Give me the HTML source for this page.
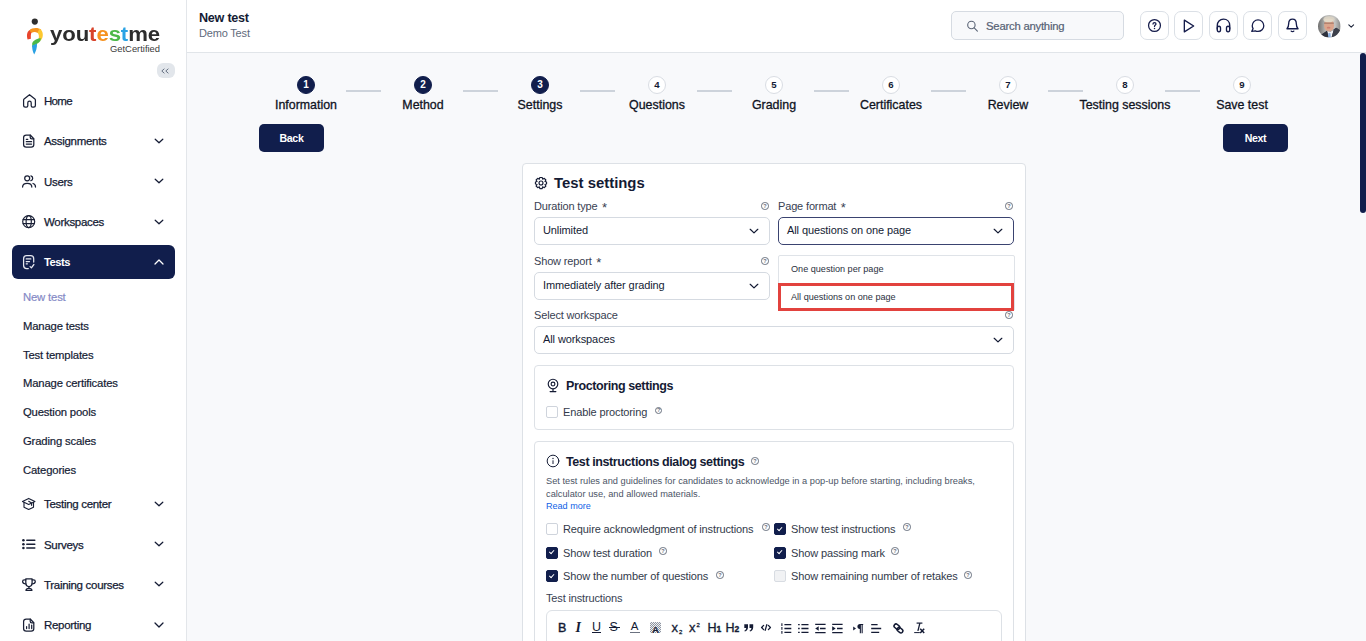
<!DOCTYPE html>
<html><head><meta charset="utf-8">
<style>
*{box-sizing:border-box;margin:0;padding:0}
html,body{width:1366px;height:641px;overflow:hidden;background:#f8f9fb;font-family:"Liberation Sans",sans-serif;color:#141b34}
.abs{position:absolute}
#side{position:absolute;left:0;top:0;width:187px;height:641px;background:#fff;border-right:1px solid #e3e6ea}
#head{position:absolute;left:187px;top:0;width:1179px;height:53px;background:#fff;border-bottom:1px solid #e1e5e9}
.mi{position:absolute;left:44px;font-size:11.5px;color:#141b34;white-space:nowrap;line-height:14px;letter-spacing:-0.3px;-webkit-text-stroke:0.25px currentColor}
.sm{position:absolute;left:23px;font-size:11.3px;color:#141b34;white-space:nowrap;line-height:14px;letter-spacing:-0.17px;-webkit-text-stroke:0.2px currentColor}
.ico{position:absolute;left:21px;width:16px;height:16px}
.chev{position:absolute;left:153px;width:12px;height:12px}
.chev path{stroke-width:1.25}
svg{display:block;overflow:visible}
.ib{position:absolute;top:11px;width:28.9px;height:29.4px;border:1px solid #dbe0e6;border-radius:7px;background:#fff}

.sc{position:absolute;top:76px;width:18px;height:18px;border-radius:50%;border:1px solid #d9dde3;background:#fff;font-size:9.6px;font-weight:bold;line-height:16px;text-align:center;color:#141b34}
.sc.on{background:#111e4c;border-color:#111e4c;color:#fff;font-size:10px}
.sl{position:absolute;top:97px;-webkit-text-stroke:0.3px #10141f;width:140px;text-align:center;font-size:12.4px;line-height:16px;color:#10141f;white-space:nowrap}
.sline{position:absolute;top:90px;margin-left:-0.8px;width:35px;height:2px;background:#cdd3db}
.btn{position:absolute;width:65px;height:28px;border-radius:5px;background:#111e4c;color:#fff;font-size:10.6px;font-weight:bold;line-height:28px;text-align:center;letter-spacing:-0.35px}
.lab{position:absolute;font-size:11px;line-height:13px;color:#384152;white-space:nowrap;letter-spacing:-0.15px}
.sel{position:absolute;height:28px;border:1px solid #d5dae1;border-radius:5px;background:#fff;font-size:11px;line-height:25px;padding-left:8px;letter-spacing:-0.1px;color:#141b34;white-space:nowrap}
.sch{position:absolute;width:12px;height:12px;fill:none;stroke:#141b34;stroke-width:1.25;stroke-linecap:round;stroke-linejoin:round}
.qi{position:absolute;width:7.5px;height:7.5px;border-radius:50%;border:0.9px solid #6a7280}
.qi:after{content:"?";position:absolute;left:1.3px;top:-0.4px;font-size:5.5px;line-height:7px;font-weight:bold;color:#6a7280}
.panel{position:absolute;border:1px solid #dde1e6;border-radius:4px;background:#fff}
.ptitle{position:absolute;font-size:12.5px;font-weight:bold;line-height:16px;color:#141b34;white-space:nowrap;letter-spacing:-0.4px}
.cb{position:absolute;width:12px;height:12px;border:1px solid #cfd4dc;border-radius:2px;background:#fff}
.cb.on{background:#111e4c;border-color:#111e4c}
.cb.on:after{content:"";position:absolute;left:3.4px;top:1.8px;width:2.4px;height:4.4px;border:solid #fff;border-width:0 1.1px 1.1px 0;transform:rotate(42deg)}
.cb.dis{background:#f1f2f4;border-color:#d8dce2}
.cbl{position:absolute;font-size:11px;line-height:14px;color:#323a4a;white-space:nowrap;letter-spacing:-0.12px}
.tbt{position:absolute;line-height:15px;color:#141b34;white-space:nowrap}
</style></head><body>
<div id="side">
<!-- logo -->
<svg class="abs" style="left:25px;top:17px" width="20" height="38" viewBox="0 0 20 38">
 <circle cx="9.8" cy="4.6" r="3.1" fill="#2e2e2e"/>
 <path d="M2.6 22.5 C1.2 17.5 2.2 13.5 6.2 12.4 L6.6 15.4 C5.6 16.8 5.8 19.8 5.9 21.8 Z" fill="#e8452c"/>
 <path d="M4.4 13.4 C6.8 10.6 13.4 10.2 16.4 13 L12.6 16 C10.6 14.6 8.2 14.8 6.4 16 Z" fill="#f7941e"/>
 <path d="M14.6 11.8 C18.6 14 18.9 20.4 15.6 23.6 L13.4 23 C14.2 20 14.2 17.4 12.4 15.6 Z" fill="#fdc82f"/>
 <path d="M15.8 21.2 C13 21.2 8.6 23 7.2 26.2 L7.2 30.4 C9.4 27.6 13.4 27 15.4 24 Z" fill="#4cb848"/>
 <path d="M7.2 28.6 C8.6 27.8 11 27.2 12 26.6 C12.2 30.6 11 34.6 9.2 37.6 C7.6 34.8 7 31.6 7.2 28.6 Z" fill="#2aa1e3"/>
</svg>
<div class="abs" id="logot" style="left:50px;top:21.5px;font-size:19.6px;font-weight:bold;letter-spacing:-0.1px;line-height:24px;transform:scaleX(1.132);transform-origin:0 0;color:#2d2d2d;white-space:nowrap">you<span style="color:#d8432a">t</span><span style="color:#f6921e">e</span><span style="color:#4db848">s</span><span style="color:#2ba3e4">t</span>me</div>
<div class="abs" id="logog" style="left:110px;top:43px;font-size:9.4px;line-height:11px;color:#3a3a3a;white-space:nowrap">GetCertified</div>
<!-- collapse -->
<div class="abs" style="left:157px;top:63px;width:18px;height:15px;border-radius:6px;background:#e2e6eb"></div>
<svg class="abs" style="left:161.2px;top:67.6px" width="9" height="6" viewBox="0 0 9 6" fill="none" stroke="#5a6578" stroke-width="0.9"><path d="M3.4 0.7 L0.8 3 L3.4 5.3 M7.4 0.7 L4.8 3 L7.4 5.3"/></svg>

<!-- Home -->
<svg class="abs" style="left:22px;top:93px" width="16" height="16" viewBox="0 0 16 16" fill="none" stroke="#1a2036" stroke-width="1.25" stroke-linecap="round" stroke-linejoin="round"><path d="M7.5 1.7 L2.1 6 Q1.6 6.4 1.6 7.1 V12.3 Q1.6 14.2 3.5 14.2 H4.4 Q5.8 14.2 5.8 12.8 V9.7 Q5.8 8.1 7.5 8.1 Q9.2 8.1 9.2 9.7 V12.8 Q9.2 14.2 10.6 14.2 H11.5 Q13.4 14.2 13.4 12.3 V7.1 Q13.4 6.4 12.9 6 Z"/></svg>
<div class="mi" style="top:94px;letter-spacing:-0.7px">Home</div>
<!-- Assignments -->
<svg class="abs" style="left:22px;top:133px" width="16" height="16" viewBox="0 0 16 16" fill="none" stroke="#1a2036" stroke-width="1.25" stroke-linecap="round" stroke-linejoin="round"><path d="M1.6 4.6 Q1.6 2 4.2 2 H8.2 L11.8 5.8 V11.6 Q11.8 14.2 9.2 14.2 H4.2 Q1.6 14.2 1.6 11.6 Z"/><path d="M8.2 2.2 V4.2 Q8.2 5.8 9.8 5.8 H11.6" /><path d="M4.3 6.3 H5.8 M4.3 8.7 H9.6 M4.3 11.1 H9.6"/></svg>
<div class="mi" style="top:134px">Assignments</div>
<svg class="chev" style="top:135px" viewBox="0 0 12 12" fill="none" stroke="#141b34" stroke-width="1.5" stroke-linecap="round" stroke-linejoin="round"><path d="M2.2 4.2 L6 7.8 L9.8 4.2"/></svg>
<!-- Users -->
<svg class="abs" style="left:21px;top:174px" width="16" height="16" viewBox="0 0 16 16" fill="none" stroke="#1a2036" stroke-width="1.25" stroke-linecap="round" stroke-linejoin="round"><circle cx="6.2" cy="4.3" r="2.5"/><path d="M9.9 1.9 A2.5 2.5 0 0 1 9.9 6.7"/><path d="M1.6 13 C1.6 10.4 3.2 9.4 6.2 9.4 C9.2 9.4 10.8 10.4 10.8 13"/><path d="M12 9.5 C13.7 9.9 14.5 11 14.5 13"/></svg>
<div class="mi" style="top:175px">Users</div>
<svg class="chev" style="top:175px" viewBox="0 0 12 12" fill="none" stroke="#141b34" stroke-width="1.5" stroke-linecap="round" stroke-linejoin="round"><path d="M2.2 4.2 L6 7.8 L9.8 4.2"/></svg>
<!-- Workspaces -->
<svg class="abs" style="left:21px;top:214px" width="16" height="16" viewBox="0 0 16 16" fill="none" stroke="#1a2036" stroke-width="1.2" stroke-linecap="round" stroke-linejoin="round"><circle cx="7.7" cy="7.6" r="6"/><ellipse cx="7.7" cy="7.6" rx="2.6" ry="6"/><path d="M2.1 5.6 H13.3 M2.1 9.6 H13.3"/></svg>
<div class="mi" style="top:215px">Workspaces</div>
<svg class="chev" style="top:216px" viewBox="0 0 12 12" fill="none" stroke="#141b34" stroke-width="1.5" stroke-linecap="round" stroke-linejoin="round"><path d="M2.2 4.2 L6 7.8 L9.8 4.2"/></svg>
<!-- Tests active -->
<div class="abs" style="left:11.7px;top:244.7px;width:163.4px;height:34.5px;border-radius:6px;background:#111e4c"></div>
<svg class="abs" style="left:21px;top:254px" width="16" height="16" viewBox="0 0 16 16" fill="none" stroke="#e6e8f0" stroke-width="1.25" stroke-linecap="round" stroke-linejoin="round"><path d="M12.7 8 V4.7 Q12.7 1.7 9.7 1.7 H5.6 Q2.6 1.7 2.6 4.7 V11.5 Q2.6 14.5 5.6 14.5 H7.3"/><path d="M5.2 4.9 H9.8 M5.2 7.5 H8.5 M5.2 9.8 H6.4"/><path d="M9.1 12.6 L10.4 13.8 L12.9 10.5"/></svg>
<div class="mi" style="top:255px;color:#fff;font-weight:bold;-webkit-text-stroke:0;letter-spacing:-0.45px;font-size:11.2px">Tests</div>
<svg class="chev" style="top:256px" viewBox="0 0 12 12" fill="none" stroke="#fff" stroke-width="1.5" stroke-linecap="round" stroke-linejoin="round"><path d="M2 8 L6 4 L10 8"/></svg>
<!-- submenu -->
<div class="sm" style="top:290px;color:#858ac6">New test</div>
<div class="sm" style="top:319px">Manage tests</div>
<div class="sm" style="top:348px">Test templates</div>
<div class="sm" style="top:376px">Manage certificates</div>
<div class="sm" style="top:405px">Question pools</div>
<div class="sm" style="top:434px">Grading scales</div>
<div class="sm" style="top:463px">Categories</div>
<!-- Testing center -->
<svg class="abs" style="left:21px;top:496px" width="16" height="16" viewBox="0 0 16 16" fill="none" stroke="#1a2036" stroke-width="1.15" stroke-linecap="round" stroke-linejoin="round"><path d="M7.7 2.4 L1.5 5.5 L7.7 8.4 L13.9 5.5 Z"/><path d="M3 6.3 V11.2 L7.7 13.5 L12.5 11.2 V6.3"/><path d="M7.7 5.3 L10.6 6.9 V9.3"/></svg>
<div class="mi" style="top:497px">Testing center</div>
<svg class="chev" style="top:498px" viewBox="0 0 12 12" fill="none" stroke="#141b34" stroke-width="1.5" stroke-linecap="round" stroke-linejoin="round"><path d="M2.2 4.2 L6 7.8 L9.8 4.2"/></svg>
<!-- Surveys -->
<svg class="abs" style="left:21px;top:537px" width="16" height="16" viewBox="0 0 16 16" fill="none" stroke="#1a2036" stroke-width="1.25" stroke-linecap="round" stroke-linejoin="round"><path d="M5.8 3.3 H13.8 M5.8 7.2 H13.8 M5.8 11 H13.8" stroke-width="1.5"/><circle cx="2.4" cy="3.3" r="1.3" fill="#1a2036" stroke="none"/><circle cx="2.4" cy="7.2" r="1.3" fill="#1a2036" stroke="none"/><circle cx="2.4" cy="11" r="1.3" fill="#1a2036" stroke="none"/></svg>
<div class="mi" style="top:538px">Surveys</div>
<svg class="chev" style="top:538px" viewBox="0 0 12 12" fill="none" stroke="#141b34" stroke-width="1.5" stroke-linecap="round" stroke-linejoin="round"><path d="M2.2 4.2 L6 7.8 L9.8 4.2"/></svg>
<!-- Training courses -->
<svg class="abs" style="left:21px;top:577px" width="16" height="16" viewBox="0 0 16 16" fill="none" stroke="#1a2036" stroke-width="1.25" stroke-linecap="round" stroke-linejoin="round"><path d="M4.8 1.8 H11.1 V5.5 C11.1 8 9.8 9.5 7.95 9.5 C6.1 9.5 4.8 8 4.8 5.5 Z"/><path d="M4.8 2.8 H3.3 Q1.6 2.8 1.6 4.4 Q1.6 6.6 5 7"/><path d="M11.1 2.8 H12.6 Q14.3 2.8 14.3 4.4 Q14.3 6.6 10.9 7"/><path d="M7.95 9.5 V11.2"/><path d="M5 13.4 Q5 11.3 7.95 11.3 Q10.9 11.3 10.9 13.4 Z"/></svg>
<div class="mi" style="top:578px">Training courses</div>
<svg class="chev" style="top:578px" viewBox="0 0 12 12" fill="none" stroke="#141b34" stroke-width="1.5" stroke-linecap="round" stroke-linejoin="round"><path d="M2.2 4.2 L6 7.8 L9.8 4.2"/></svg>
<!-- Reporting -->
<svg class="abs" style="left:22px;top:617px" width="16" height="16" viewBox="0 0 16 16" fill="none" stroke="#1a2036" stroke-width="1.25" stroke-linecap="round" stroke-linejoin="round"><path d="M1.6 4.6 Q1.6 2 4.2 2 H8.2 L11.8 5.8 V11.6 Q11.8 14.2 9.2 14.2 H4.2 Q1.6 14.2 1.6 11.6 Z"/><path d="M8.2 2.2 V4.2 Q8.2 5.8 9.8 5.8 H11.6" /><path d="M4.6 11.6 V9.7 M7.1 11.6 V7 M9.7 11.6 V8.1"/></svg>
<div class="mi" style="top:618px">Reporting</div>
<svg class="chev" style="top:619px" viewBox="0 0 12 12" fill="none" stroke="#141b34" stroke-width="1.5" stroke-linecap="round" stroke-linejoin="round"><path d="M2 4 L6 8 L10 4"/></svg>
</div>
<div id="head">
<div class="abs" style="left:12px;top:11px;font-size:12.6px;font-weight:bold;line-height:15px;color:#141b34;letter-spacing:-0.25px;white-space:nowrap">New test</div>
<div class="abs" style="left:12px;top:27px;font-size:11px;line-height:13px;color:#5f6b7c;white-space:nowrap;letter-spacing:-0.18px">Demo Test</div>
<!-- search -->
<div class="abs" style="left:764px;top:11px;width:173px;height:29.4px;border:1px solid #d6dbe2;border-radius:5px;background:#f8f9fb"></div>
<svg class="abs" style="left:779px;top:20px" width="12" height="12" viewBox="0 0 12 12" fill="none" stroke="#5a6476" stroke-width="1.1" stroke-linecap="round"><circle cx="5.4" cy="5" r="3.7"/><path d="M8.2 7.9 L11.4 11.1"/></svg>
<div class="abs" style="left:799px;top:19px;font-size:11.3px;line-height:14px;color:#566174;white-space:nowrap;letter-spacing:-0.22px;-webkit-text-stroke:0.2px #566174">Search anything</div>
<!-- icon buttons -->
<div class="ib" style="left:953px"></div>
<div class="ib" style="left:987.3px"></div>
<div class="ib" style="left:1021.8px"></div>
<div class="ib" style="left:1056px"></div>
<div class="ib" style="left:1091px"></div>
<svg class="abs" style="left:959.7px;top:18.4px" width="15" height="15" viewBox="0 0 24 24" fill="none" stroke="#141b4a" stroke-width="2" stroke-linecap="round" stroke-linejoin="round"><circle cx="12" cy="12" r="9.5"/><path d="M9.6 9.6 C9.6 8 10.6 7.2 12 7.2 C13.4 7.2 14.4 8 14.4 9.4 C14.4 11.2 12 11.4 12 13.4"/><path d="M12 16.6 V16.7" stroke-width="2.4"/></svg>
<svg class="abs" style="left:993px;top:18px" width="16" height="16" viewBox="0 0 24 24" fill="none" stroke="#141b4a" stroke-width="2" stroke-linecap="round" stroke-linejoin="round"><path d="M6.5 3.2 L20.5 12 L6.5 20.8 Z"/></svg>
<svg class="abs" style="left:1027.5px;top:17.2px" width="17" height="17" viewBox="0 0 24 24" fill="none" stroke="#141b4a" stroke-width="1.9" stroke-linecap="round" stroke-linejoin="round"><path d="M3.2 17 V12 C3.2 6.8 6.8 3 12 3 C17.2 3 20.8 6.8 20.8 12 V17"/><path d="M3.2 16 C3.2 14 4.2 13 5.6 13 C7 13 7.8 14 7.8 16 V18 C7.8 20 7 21 5.6 21 C4.2 21 3.2 20 3.2 18 Z"/><path d="M16.2 16 C16.2 14 17 13 18.4 13 C19.8 13 20.8 14 20.8 16 V18 C20.8 20 19.8 21 18.4 21 C17 21 16.2 20 16.2 18 Z"/></svg>
<svg class="abs" style="left:1062.5px;top:18.4px" width="15.4" height="15.4" viewBox="0 0 24 24" fill="none" stroke="#141b4a" stroke-width="2" stroke-linecap="round" stroke-linejoin="round"><path d="M12.5 3 C17.5 3 21.5 7 21.5 12 C21.5 17 17.5 21 12.5 21 C11 21 9.6 20.7 8.4 20 L2.8 20.8 L4.8 16.6 C4 15.2 3.5 13.7 3.5 12 C3.5 7 7.5 3 12.5 3 Z"/></svg>
<svg class="abs" style="left:1097.1px;top:17.2px" width="17" height="17" viewBox="0 0 24 24" fill="none" stroke="#141b4a" stroke-width="1.9" stroke-linecap="round" stroke-linejoin="round"><path d="M4.2 16.6 C5.8 15 6.6 13.2 6.6 9.6 C6.6 5.6 8.8 3 12 3 C15.2 3 17.4 5.6 17.4 9.6 C17.4 13.2 18.2 15 19.8 16.6 Z"/><path d="M10.2 20 C10.8 20.9 13.2 20.9 13.8 20"/></svg>
<!-- avatar -->
<svg class="abs" style="left:1131.4px;top:14.6px" width="22.6" height="22.6" viewBox="0 0 100 100">
<defs><clipPath id="avc"><circle cx="50" cy="50" r="50"/></clipPath>
<linearGradient id="avg" x1="0" x2="1" y1="0" y2="0"><stop offset="0" stop-color="#6f6f6f"/><stop offset="0.35" stop-color="#b9b9b7"/><stop offset="0.75" stop-color="#c4c4c2"/><stop offset="1" stop-color="#8a8a88"/></linearGradient>
<filter id="avb" x="-10%" y="-10%" width="120%" height="120%"><feGaussianBlur stdDeviation="2.2"/></filter></defs>
<g clip-path="url(#avc)">
<rect width="100" height="100" fill="url(#avg)"/>
<g filter="url(#avb)">
<ellipse cx="49" cy="20" rx="25" ry="15" fill="#d9d2c4"/>
<ellipse cx="49" cy="46" rx="22" ry="27" fill="#dca58c"/>
<ellipse cx="47" cy="24" rx="20" ry="8" fill="#e3d9c8"/>
<rect x="27" y="34" width="43" height="4" fill="#8a5e50" opacity="0.8"/>
<ellipse cx="47" cy="56" rx="8" ry="4" fill="#cf7f70"/>
<path d="M8 92 L40 70 L50 78 L80 56 L100 70 L100 100 L8 100 Z" fill="#373a47"/>
<path d="M40 70 L48 100 L60 100 L70 64 L52 76 Z" fill="#f2f3f6"/>
<path d="M46 80 L55 80 L57 100 L44 100 Z" fill="#86aee0"/>
<path d="M8 92 L40 70 L46 100 L8 100 Z" fill="#2f323e"/>
<path d="M70 64 L82 56 L100 70 L100 100 L60 100 Z" fill="#3c3f4c"/>
</g></g></svg>
<svg class="abs" style="left:1160.6px;top:24.2px" width="6.4" height="4.4" viewBox="0 0 6.4 4.4" fill="none" stroke="#1a2238" stroke-width="1.1" stroke-linecap="round" stroke-linejoin="round"><path d="M0.8 0.9 L3.2 3.2 L5.6 0.9"/></svg>
</div>
<div id="main">
<div class="sc on" style="left:297px">1</div>
<div class="sl" style="left:236px">Information</div>
<div class="sline" style="left:347px"></div>
<div class="sc on" style="left:414px">2</div>
<div class="sl" style="left:353px">Method</div>
<div class="sline" style="left:464px"></div>
<div class="sc on" style="left:531px">3</div>
<div class="sl" style="left:470px">Settings</div>
<div class="sline" style="left:581px"></div>
<div class="sc" style="left:648px">4</div>
<div class="sl" style="left:587px">Questions</div>
<div class="sline" style="left:698px"></div>
<div class="sc" style="left:765px">5</div>
<div class="sl" style="left:704px">Grading</div>
<div class="sline" style="left:815px"></div>
<div class="sc" style="left:882px">6</div>
<div class="sl" style="left:821px">Certificates</div>
<div class="sline" style="left:932px"></div>
<div class="sc" style="left:999px">7</div>
<div class="sl" style="left:938px">Review</div>
<div class="sline" style="left:1049px"></div>
<div class="sc" style="left:1116px">8</div>
<div class="sl" style="left:1055px">Testing sessions</div>
<div class="sline" style="left:1166px"></div>
<div class="sc" style="left:1233px">9</div>
<div class="sl" style="left:1172px">Save test</div>
<div class="btn" style="left:259px;top:124px">Back</div>
<div class="btn" style="left:1223px;top:124px">Next</div>
<div class="abs" style="left:1360px;top:53px;width:6px;height:159.5px;background:#111e4c;border-radius:3px"></div>
<div class="abs" id="card" style="left:522px;top:163px;width:504px;height:500px;background:#fff;border:1px solid #dde1e6;border-radius:4px"></div>
<svg class="abs" style="left:534px;top:175.6px" width="14" height="14" viewBox="0 0 24 24" fill="none" stroke="#141b34" stroke-width="2" stroke-linecap="round" stroke-linejoin="round"><circle cx="12" cy="12" r="3.4"/><path d="M10 2.5 H14 L14.8 5.4 L17.6 4 L20.4 6.8 L18.8 9.4 L21.5 10.2 V13.8 L18.8 14.6 L20.4 17.2 L17.6 20 L14.8 18.6 L14 21.5 H10 L9.2 18.6 L6.4 20 L3.6 17.2 L5.2 14.6 L2.5 13.8 V10.2 L5.2 9.4 L3.6 6.8 L6.4 4 L9.2 5.4 Z"/></svg>
<div class="abs" style="left:554px;top:174px;font-size:14.9px;font-weight:bold;line-height:19px;color:#141b34;white-space:nowrap">Test settings</div>

<div class="lab" style="left:534px;top:200px">Duration type<span style="font-size:13px;line-height:0;position:relative;top:2px;margin-left:4.5px">*</span></div>
<div class="qi" style="left:761px;top:202.4px"></div>
<div class="sel" style="left:534px;top:217px;width:236px">Unlimited</div>
<svg class="sch" style="left:748px;top:225px" viewBox="0 0 12 12"><path d="M2.2 4.3 L6 7.9 L9.8 4.3"/></svg>

<div class="lab" style="left:778px;top:200px">Page format<span style="font-size:13px;line-height:0;position:relative;top:2px;margin-left:4.5px">*</span></div>
<div class="qi" style="left:1005px;top:202.4px"></div>
<div class="sel" style="left:778px;top:217px;width:236px;border-color:#3a4370">All questions on one page</div>
<svg class="sch" style="left:992px;top:225px" viewBox="0 0 12 12"><path d="M2.2 4.3 L6 7.9 L9.8 4.3"/></svg>

<div class="lab" style="left:534px;top:255px">Show report<span style="font-size:13px;line-height:0;position:relative;top:2px;margin-left:4.5px">*</span></div>
<div class="qi" style="left:761px;top:257.4px"></div>
<div class="sel" style="left:534px;top:272px;width:236px">Immediately after grading</div>
<svg class="sch" style="left:748px;top:280px" viewBox="0 0 12 12"><path d="M2.2 4.3 L6 7.9 L9.8 4.3"/></svg>

<!-- dropdown -->
<div class="abs" style="left:778px;top:255px;width:237px;height:56px;background:#fff;border:1px solid #dfe3e8;border-radius:2px"></div>
<div class="abs" style="left:791px;top:264px;font-size:9.1px;line-height:11px;color:#2a3040;white-space:nowrap">One question per page</div>
<div class="abs" style="left:778px;top:283px;width:236px;height:28px;border:3px solid #e2423e;background:#fff"></div>
<div class="abs" style="left:791px;top:292px;font-size:9.1px;line-height:11px;color:#2a3040;white-space:nowrap">All questions on one page</div>

<div class="lab" style="left:534px;top:309px">Select workspace</div>
<div class="qi" style="left:1005px;top:311.4px"></div>
<div class="sel" style="left:534px;top:326.4px;width:480px">All workspaces</div>
<svg class="sch" style="left:992px;top:334.4px" viewBox="0 0 12 12"><path d="M2.2 4.3 L6 7.9 L9.8 4.3"/></svg>

<!-- Proctoring -->
<div class="panel" style="left:534px;top:365.4px;width:480px;height:64.2px"></div>
<svg class="abs" style="left:546px;top:378px" width="14" height="15" viewBox="0 0 24 26" fill="none" stroke="#141b34" stroke-width="2" stroke-linecap="round" stroke-linejoin="round"><circle cx="12" cy="10.5" r="8.3"/><circle cx="12" cy="10.5" r="3.3"/><path d="M12 19 V23 M7 23.5 H17"/></svg>
<div class="ptitle" style="left:566px;top:378px">Proctoring settings</div>
<div class="cb" style="left:546px;top:406px"></div>
<div class="cbl" style="left:563px;top:404.5px">Enable proctoring</div>
<div class="qi" style="left:654.7px;top:406.7px"></div>

<!-- Test instructions -->
<div class="panel" style="left:534px;top:441px;width:480px;height:230px"></div>
<svg class="abs" style="left:546px;top:454px" width="14" height="14" viewBox="0 0 24 24" fill="none" stroke="#141b34" stroke-width="1.7" stroke-linecap="round" stroke-linejoin="round"><circle cx="12" cy="12" r="10"/><path d="M12 11.5 V16.5"/><path d="M12 7.6 V7.7" stroke-width="2.4"/></svg>
<div class="ptitle" style="left:566px;top:454px">Test instructions dialog settings</div>
<div class="qi" style="left:751px;top:457px"></div>
<div class="abs" style="left:546px;top:475px;font-size:9.25px;line-height:13px;color:#4c5566;white-space:nowrap">Set test rules and guidelines for candidates to acknowledge in a pop-up before starting, including breaks,<br>calculator use, and allowed materials.</div>
<div class="abs" style="left:546px;top:500px;font-size:9.05px;line-height:12px;color:#0f5fe6;white-space:nowrap">Read more</div>

<div class="cb" style="left:546px;top:523px"></div>
<div class="cbl" style="left:563px;top:522px">Require acknowledgment of instructions</div>
<div class="qi" style="left:762px;top:523px"></div>
<div class="cb on" style="left:774px;top:523px"></div>
<div class="cbl" style="left:791px;top:522px">Show test instructions</div>
<div class="qi" style="left:903px;top:523px"></div>

<div class="cb on" style="left:546px;top:546.5px"></div>
<div class="cbl" style="left:563px;top:545.5px">Show test duration</div>
<div class="qi" style="left:659px;top:547px"></div>
<div class="cb on" style="left:774px;top:546.5px"></div>
<div class="cbl" style="left:791px;top:545.5px">Show passing mark</div>
<div class="qi" style="left:891px;top:547px"></div>

<div class="cb on" style="left:546px;top:570px"></div>
<div class="cbl" style="left:563px;top:569px">Show the number of questions</div>
<div class="qi" style="left:716px;top:571px"></div>
<div class="cb dis" style="left:774px;top:570px"></div>
<div class="cbl" style="left:791px;top:569px">Show remaining number of retakes</div>
<div class="qi" style="left:964px;top:571px"></div>

<div class="lab" style="left:546px;top:592px">Test instructions</div>
<div class="abs" style="left:546px;top:609.5px;width:456px;height:60px;border:1px solid #dde1e6;border-radius:6px;background:#fff"></div>
<!-- toolbar -->
<div class="tbt" style="left:558px;top:620.5px;font-size:12.5px;-webkit-text-stroke:0.45px #141b34">B</div>
<div class="tbt" style="left:575.5px;top:619.5px;font-style:italic;font-family:'Liberation Serif',serif;font-weight:bold;font-size:14px">I</div>
<div class="tbt" style="left:592px;top:620px;font-size:12.5px">U</div>
<div class="abs" style="left:592px;top:632px;width:9px;height:1px;background:#141b34"></div>
<div class="tbt" style="left:609.5px;top:620px;font-size:12.5px">S</div>
<div class="abs" style="left:609px;top:627px;width:10.5px;height:1px;background:#141b34"></div>
<div class="tbt" style="left:630.8px;top:619px;font-size:11.5px">A</div>
<div class="abs" style="left:630px;top:631.5px;width:9.5px;height:1px;background:#6b7280"></div>
<div class="abs" style="left:650px;top:622px;width:10.5px;height:11px;background:repeating-conic-gradient(#8f95a1 0 25%,#eef0f2 0 50%) 0 0/2px 2px"></div>
<div class="tbt" style="left:651.9px;top:621.5px;font-size:9.8px;font-weight:bold">A</div>
<div class="tbt" style="left:671.5px;top:620px;font-size:13px;-webkit-text-stroke:0.3px #141b34">x<span style="font-size:6px;position:relative;top:2px;left:1px">2</span></div>
<div class="tbt" style="left:689px;top:620px;font-size:13px;-webkit-text-stroke:0.3px #141b34">x<span style="font-size:6px;position:relative;top:-5px;left:1px">2</span></div>
<div class="tbt" style="left:707.5px;top:620.5px;font-size:12.5px;-webkit-text-stroke:0.35px #141b34">H<span style="font-size:8.5px;font-weight:bold">1</span></div>
<div class="tbt" style="left:725.5px;top:620.5px;font-size:12.5px;-webkit-text-stroke:0.35px #141b34">H<span style="font-size:8.5px;font-weight:bold">2</span></div>
<svg class="abs" style="left:743.8px;top:624px" width="10" height="8" viewBox="0 0 10 8" fill="#141b34"><path d="M0.3 0.2 H4 V3.2 C4 5.6 2.8 7 0.8 7.6 L0.4 6.6 C1.6 6.1 2.2 5.2 2.2 4 H0.3 Z M5.5 0.2 H9.2 V3.2 C9.2 5.6 8 7 6 7.6 L5.6 6.6 C6.8 6.1 7.4 5.2 7.4 4 H5.5 Z"/></svg>
<svg class="abs" style="left:761px;top:624px" width="10" height="7" viewBox="0 0 10 7" fill="none" stroke="#141b34" stroke-width="1.3" stroke-linecap="round" stroke-linejoin="round"><path d="M2.6 1.4 L0.6 3.5 L2.6 5.6 M7.4 1.4 L9.4 3.5 L7.4 5.6 M5.8 0.6 L4.2 6.4"/></svg>
<!-- ol -->
<svg class="abs" style="left:781px;top:622.5px" width="11" height="11" viewBox="0 0 11 11" fill="none" stroke="#141b34" stroke-width="1.35"><path d="M3.4 1.6 H10.3 M3.4 5.5 H10.3 M3.4 9.4 H10.3"/><path d="M0.9 0.2 V2.9 M0.9 4.1 V6.8 M0.9 8 V10.8" stroke-width="1.1"/></svg>
<!-- ul -->
<svg class="abs" style="left:797.7px;top:622.5px" width="11" height="11" viewBox="0 0 11 11" fill="none" stroke="#141b34" stroke-width="1.35"><path d="M3.4 1.6 H10.5 M3.4 5.5 H10.5 M3.4 9.4 H10.5"/><path d="M0.1 1.6 H1.7 M0.1 5.5 H1.7 M0.1 9.4 H1.7"/></svg>
<!-- outdent -->
<svg class="abs" style="left:815px;top:622.5px" width="11" height="11" viewBox="0 0 11 11" fill="none" stroke="#141b34" stroke-width="1.35"><path d="M0.2 1.4 H10.6 M5 5.5 H10.6 M0.2 9.6 H10.6"/><path d="M3.7 3.2 L0.2 5.5 L3.7 7.8 Z" fill="#141b34" stroke="none"/></svg>
<!-- indent -->
<svg class="abs" style="left:832.4px;top:622.5px" width="11" height="11" viewBox="0 0 11 11" fill="none" stroke="#141b34" stroke-width="1.35"><path d="M0.2 1.4 H10.6 M5 5.5 H10.6 M0.2 9.6 H10.6"/><path d="M0.2 3.2 L3.7 5.5 L0.2 7.8 Z" fill="#141b34" stroke="none"/></svg>
<!-- direction -->
<svg class="abs" style="left:852.8px;top:622.5px" width="11" height="11" viewBox="0 0 11 11" fill="#141b34"><path d="M0.2 3.6 L3 5.5 L0.2 7.4 Z"/><path d="M7 0.9 H10.2 V2 H9.7 V10.2 H8.6 V2 H7.9 V10.2 H6.8 V6 C5.3 6 4.4 4.9 4.4 3.5 C4.4 2 5.5 0.9 7 0.9 Z"/></svg>
<!-- align -->
<svg class="abs" style="left:870.8px;top:622.5px" width="11" height="11" viewBox="0 0 11 11" fill="none" stroke="#141b34" stroke-width="1.35"><path d="M0.2 1.6 H6.6 M0.2 5.5 H10.2 M0.2 9.4 H8.2"/></svg>
<!-- link -->
<svg class="abs" style="left:893.2px;top:622.5px" width="11" height="11" viewBox="0 0 11 11" fill="none" stroke="#141b34" stroke-width="1.5" stroke-linecap="round"><rect x="0.8" y="1.7" width="6.2" height="4" rx="2" transform="rotate(40 3.9 3.7)"/><rect x="3.9" y="5.2" width="6.2" height="4" rx="2" transform="rotate(40 7 7.2)"/></svg>
<!-- clear format -->
<svg class="abs" style="left:913.6px;top:621.5px" width="11" height="12" viewBox="0 0 11 12" fill="none" stroke="#141b34" stroke-width="1.15" stroke-linecap="butt"><path d="M2.6 1.1 H8.4" stroke-width="1.2"/><path d="M5.9 1.1 L3.9 8.8" stroke-width="1.3"/><path d="M0.2 10.6 H5.8" stroke-width="1"/><path d="M6.2 6.8 L10.2 11 M10.2 6.8 L6.2 11" stroke-width="1.5"/></svg>
</div>
</body></html>
